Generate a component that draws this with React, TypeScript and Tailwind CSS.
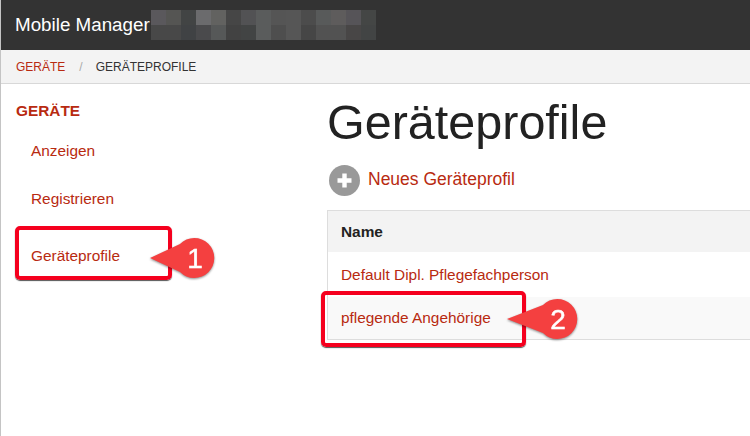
const top = ['#5a585c','#555553','#424444','#6b6b6d','#626260','#464646','#525254','#5a5c5c','#555555','#565656','#4c4c4c','#585a5a','#5e5c5c','#565458','#444645'];
const bottom = ['#484848','#484848','#404244','#4a4a4c','#565858','#424242','#424444','#5a5c5c','#4e4e4e','#565656','#464646','#525252','#525252','#484646','#424444'];

function Callout({ n, dist }: { n: string; dist: number }) {
  const a = dist - 14;
  return (
    <svg width="74" height="44" viewBox="0 0 74 44" className="drop-shadow-[0_1px_1px_rgba(0,0,0,0.45)]">
      <path d={`M0 21 L${a} 7 A20 20 0 1 1 ${a} 35 Z`} fill="#f44040" />
      <text x={dist + 1} y="30.5" textAnchor="middle" fill="#fff" fontSize="28" fontFamily="Liberation Sans" stroke="#fff" strokeWidth="0.5">{n}</text>
    </svg>
  );
}

export default function App() {
  return (
    <div className="w-[750px] h-[436px] overflow-hidden bg-white relative font-['Liberation_Sans',sans-serif] border-l border-[#c4c4c4]">
      <header className="h-[50px] bg-[#333333] flex items-center pl-[15px] -ml-px relative">
        <span className="text-white text-[18.8px] leading-none">Mobile Manager</span>
        <div className="ml-px flex flex-col">
          <div className="flex">{top.map((c, i) => <div key={i} className="w-[15px] h-[15px]" style={{ background: c }} />)}</div>
          <div className="flex">{bottom.map((c, i) => <div key={i} className="w-[15px] h-[15px]" style={{ background: c }} />)}</div>
        </div>
      </header>
      <nav className="h-[34px] bg-[#f3f3f3] border-b border-[#d8d8d8] flex items-center pl-[15px] text-[12px]">
        <span className="text-[#b82a10]">GERÄTE</span>
        <span className="text-[#aaaaaa] ml-[14px]">/</span>
        <span className="text-[#333333] ml-[13px]">GERÄTEPROFILE</span>
      </nav>
      <div className="flex">
        <aside className="w-[326px] shrink-0 pl-[15px] pt-[19px]">
          <div className="text-[#b82a10] text-[15.4px] font-bold leading-[16px]">GERÄTE</div>
          <ul className="mt-[8px] text-[15.4px] text-[#b82a10]">
            <li className="h-[48px] flex items-center pl-[15px]">Anzeigen</li>
            <li className="h-[48px] flex items-center pl-[15px]">Registrieren</li>
            <li className="h-[48px] mt-[9px] flex items-center pl-[15px]">Geräteprofile</li>
          </ul>
        </aside>
        <main className="flex-1">
          <h1 className="text-[#222222] text-[48.5px] leading-[56px] mt-[10px]">Geräteprofile</h1>
          <div className="flex items-center mt-[15px] ml-[2px]">
            <span className="w-[31px] h-[31px] rounded-full bg-[#999999] flex items-center justify-center">
              <svg width="17" height="17" viewBox="0 0 17 17"><path d="M8.5 1.5v14M1.5 8.5h14" stroke="#fff" strokeWidth="4.4" /></svg>
            </span>
            <span className="text-[#b82a10] text-[17.5px] ml-[8px] -mt-[2px]">Neues Geräteprofil</span>
          </div>
          <div className="mt-[14px] border border-[#dddddd] border-r-0 h-[130px]">
            <div className="h-[41px] bg-[#f3f3f3] flex items-center pl-[13px] text-[15.4px] font-bold text-[#222222]">Name</div>
            <div className="h-[45px] flex items-center pl-[13px] text-[15.4px] text-[#b82a10]">Default Dipl. Pflegefachperson</div>
            <div className="h-[42px] bg-[#f9f9f9] flex items-center pl-[13px] text-[15.4px] text-[#b82a10]">pflegende Angehörige</div>
          </div>
        </main>
      </div>
      <div className="absolute left-[14px] top-[226px] w-[157px] h-[54px] border-[4px] border-[#f5001e] rounded-[5px] shadow-[0_1px_1px_#555]" />
      <div className="absolute left-[149px] top-[237px]"><Callout n="1" dist={44} /></div>
      <div className="absolute left-[320px] top-[291px] w-[205px] h-[56px] border-[4px] border-[#f5001e] rounded-[5px] shadow-[0_1px_1px_#555]" />
      <div className="absolute left-[506px] top-[298px]"><Callout n="2" dist={50} /></div>
    </div>
  );
}
